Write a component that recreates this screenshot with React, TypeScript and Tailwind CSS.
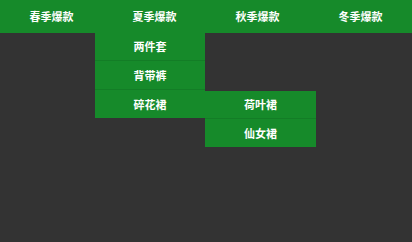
import React from 'react';

const font = { fontFamily: '"Noto Sans CJK SC", "Noto Sans", sans-serif' };

export default function App() {
    const tops = ['春季爆款', '夏季爆款', '秋季爆款', '冬季爆款'];

    return (
        <div className="w-[412px] h-[242px] bg-[#333333] relative overflow-hidden" style={font}>
            <ul className="flex h-[33px] bg-[#168a2a]">
                {tops.map((t) => (
                    <li key={t} className="flex-1 flex items-center justify-center text-white text-[11px] font-bold">
                        {t}
                    </li>
                ))}
            </ul>

            {/* dropdown under summer */}
            <ul className="absolute left-[95px] top-[33px] w-[110px]">
                <li className="h-[28px] flex items-center justify-center bg-[#168a2a] border-b border-[#137d26] text-white text-[11px] font-bold">两件套</li>
                <li className="h-[29px] flex items-center justify-center bg-[#168a2a] border-b border-[#137d26] text-white text-[11px] font-bold">背带裤</li>
                <li className="relative h-[28px] flex items-center justify-center bg-[#168a2a] text-white text-[11px] font-bold">
                    碎花裙
                    <ul className="absolute left-[110px] top-[1px] w-[111px]">
                        <li className="h-[28px] flex items-center justify-center bg-[#168a2a] border-b border-[#137d26]">荷叶裙</li>
                        <li className="h-[28px] flex items-center justify-center bg-[#168a2a]">仙女裙</li>
                    </ul>
                </li>
            </ul>
        </div>
    );
}
